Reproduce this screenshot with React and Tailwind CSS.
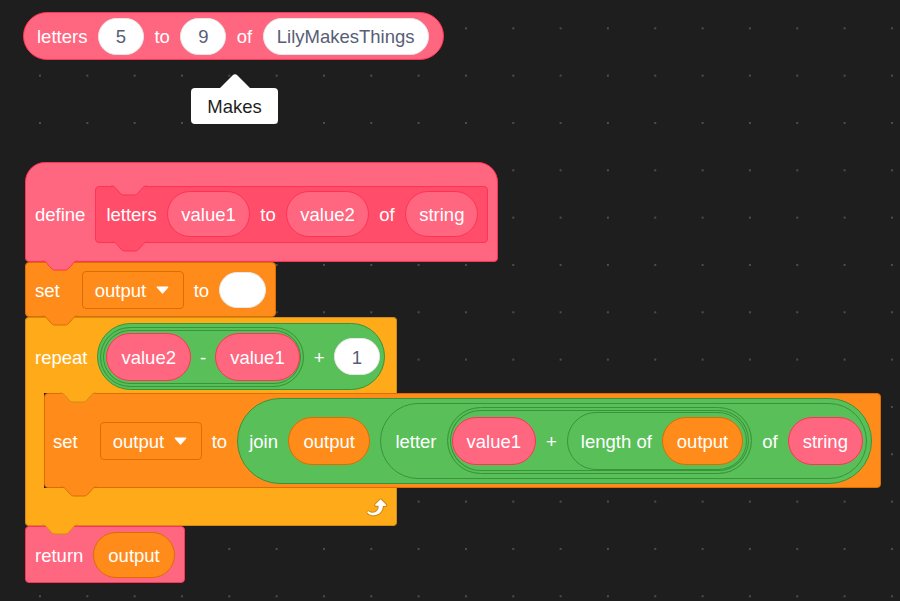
import React from 'react';

const TAB = 'M0 0 C3 0 4 1 5 2.5 L9 7 C10 8 11 9 13 9 H23 C25 9 26 8 27 7 L31 2.5 C32 1 33 0 36 0';

// label text sits a little below the box centre, like Scratch's
function T({ children }) {
  return <span className="pt-[3px]">{children}</span>;
}

// notch tab: drawn over the block that follows
function Tab({ fill, stroke, className }) {
  return (
    <svg className={`absolute z-10 ${className}`} width="36" height="10" viewBox="0 0 36 10" overflow="visible">
      <path d={TAB} fill={fill} stroke={stroke} strokeWidth="1" />
    </svg>
  );
}

function Input({ children, className = '' }) {
  return (
    <span className={`flex h-[37px] min-w-[46px] items-center justify-center rounded-full border border-[#e8e8e8] bg-white px-[13px] text-[#575E75] ${className}`}>
      <T>{children}</T>
    </span>
  );
}

function Arg({ children, h = 'h-[48px]', px = 'px-[14px]' }) {
  return (
    <span className={`flex ${h} ${px} items-center rounded-full border border-[#FF3355] bg-[#FF6680]`}>
      <T>{children}</T>
    </span>
  );
}

function Var({ children, h = 'h-[48px]' }) {
  return (
    <span className={`flex ${h} items-center rounded-full border border-[#DB6E00] bg-[#FF8C1A] px-[14px]`}>
      <T>{children}</T>
    </span>
  );
}

function Dropdown() {
  return (
    <span className="ml-[12px] flex h-[38px] w-[102px] items-center gap-[10px] rounded-[4px] border border-[#DB6E00] bg-[#FF8C1A] pl-[12px]">
      <T>output</T>
      <svg width="13" height="8" viewBox="0 0 13 8">
        <path d="M1.5 1.2 H11.5 L6.5 6.8 Z" fill="#fff" stroke="#fff" strokeWidth="1.6" strokeLinejoin="round" />
      </svg>
    </span>
  );
}

function RepeatIcon() {
  return (
    <svg width="26" height="26" viewBox="0 0 24 24">
      <path
        d="M23.3,11c-0.3,0.6-0.9,1-1.5,1h-1.6c-0.1,1.3-0.5,2.5-1.1,3.6c-0.9,1.7-2.3,3.2-4.1,4.1c-1.7,0.9-3.6,1.2-5.5,0.9c-1.8-0.3-3.5-1.1-4.9-2.3c-0.7-0.7-0.7-1.9,0-2.6c0.6-0.6,1.6-0.7,2.3-0.2H7c0.9,0.6,1.9,0.9,2.9,0.9s1.9-0.3,2.7-0.9c1.1-0.8,1.8-2.1,1.8-3.5h-1.5c-0.9,0-1.7-0.7-1.7-1.7c0-0.4,0.2-0.9,0.5-1.2l4.4-4.4c0.7-0.6,1.7-0.6,2.4,0L23,9.2C23.5,9.7,23.6,10.4,23.3,11z"
        fill="#cf8b17"
      />
      <path
        d="M21.8,11h-2.6c0,1.5-0.3,2.9-1,4.2c-0.8,1.6-2.1,2.8-3.7,3.6c-1.5,0.8-3.3,1.1-4.9,0.8c-1.6-0.2-3.2-1-4.4-2.1c-0.4-0.3-0.4-0.9-0.1-1.2c0.3-0.4,0.9-0.4,1.2-0.1l0,0c1,0.7,2.2,1.1,3.4,1.1s2.3-0.3,3.3-1c0.9-0.6,1.6-1.5,2-2.6c0.3-0.9,0.4-1.8,0.2-2.8h-2.4c-0.4,0-0.7-0.3-0.7-0.7c0-0.2,0.1-0.3,0.2-0.4l4.4-4.4c0.3-0.3,0.7-0.3,0.9,0L22,9.8c0.3,0.3,0.4,0.6,0.3,0.9S22,11,21.8,11z"
        fill="#fff"
      />
    </svg>
  );
}

function Tooltip() {
  return (
    <div className="absolute left-[191px] top-[73px] flex flex-col items-center">
      <svg width="34" height="16" viewBox="0 0 34 16" className="-mb-px">
        <path d="M1 16 L14.5 2.5 Q17 0 19.5 2.5 L33 16 Z" fill="#fff" />
      </svg>
      <div className="flex h-[36px] w-[87px] items-center justify-center rounded-[4px] bg-white text-[#1f1f1f]">
        <T>Makes</T>
      </div>
    </div>
  );
}

export default function App() {
  return (
    <div className="relative h-[601px] w-[900px] overflow-hidden bg-[#1e1e1e] bg-[radial-gradient(circle,#4d4d4d_0.9px,transparent_1.5px)] bg-[length:47.33px_47.33px] bg-[position:16.33px_4.67px] font-['Liberation_Sans',Arial,sans-serif] text-[18.5px] leading-none text-white">
      {/* loose reporter */}
      <div className="absolute left-[23px] top-[12px] flex h-[48px] items-center gap-[10.5px] rounded-full border border-[#FF3355] bg-[#FF6680] pl-[13px] pr-[14px]">
        <T>letters</T>
        <Input>5</Input>
        <T>to</T>
        <Input>9</Input>
        <T>of</T>
        <Input>LilyMakesThings</Input>
      </div>

      <Tooltip />

      {/* script */}
      <div className="absolute left-[25px] top-[162px] flex flex-col items-start">
        {/* define hat */}
        <div className="relative flex h-[100px] items-center gap-[10px] rounded-t-[20px] rounded-b-[4px] border border-[#FF3355] bg-[#FF6680] pl-[9px] pr-[9px] pt-[4px]">
          <T>define</T>
          <div className="relative flex h-[57px] items-center gap-[10.5px] rounded-[4px] border border-[#FF3355] bg-[#FF4D6A] pl-[10px] pr-[9px]">
            <Tab fill="#FF6680" stroke="#FF3355" className="left-[15px] top-[-1px]" />
            <T>letters</T>
            <Arg h="h-[46px]" px="px-[13px]">value1</Arg>
            <T>to</T>
            <Arg h="h-[46px]" px="px-[13px]">value2</Arg>
            <T>of</T>
            <Arg h="h-[46px]" px="px-[13px]">string</Arg>
            <Tab fill="#FF4D6A" stroke="#FF3355" className="left-[16px] top-full" />
          </div>
          <Tab fill="#FF6680" stroke="#FF3355" className="left-[16px] top-full" />
        </div>

        {/* set output to "" */}
        <div className="relative flex h-[55px] items-center gap-[10px] rounded-[4px] border border-[#DB6E00] bg-[#FF8C1A] pl-[9px] pr-[9px]">
          <T>set</T>
          <Dropdown />
          <T>to</T>
          <span className="h-[36px] w-[47px] rounded-full border border-[#e8e8e8] bg-white" />
          <Tab fill="#FF8C1A" stroke="#DB6E00" className="left-[16px] top-full" />
        </div>

        {/* repeat */}
        <div className="flex flex-col items-start">
          <div className="relative flex h-[76px] w-[372px] items-center gap-[9.5px] rounded-t-[4px] border-x border-t border-[#CF8B17] bg-[#FFAB19] pl-[9px] pt-[2px]">
            <T>repeat</T>
            <div className="flex h-[67px] items-center gap-[9.5px] rounded-full border border-[#389438] bg-[#59C059] pl-[2.5px] pr-[4.5px]">
              <div className="flex h-[60px] items-center gap-[9px] rounded-full border border-[#389438] bg-[#59C059] pl-[5px] pr-[3.5px] shadow-[inset_0_0_0_2px_#59C059,inset_0_0_0_3px_#389438]">
                <Arg>value2</Arg>
                <T>-</T>
                <Arg>value1</Arg>
              </div>
              <T>+</T>
              <Input>1</Input>
            </div>
            <Tab fill="#FFAB19" stroke="#CF8B17" className="left-[34px] top-full" />
          </div>

          <div className="flex">
            <div className="w-[19px] border-l border-[#CF8B17] bg-[#FFAB19]" />
            {/* set output to join ... */}
            <div className="relative flex h-[95px] items-center gap-[10px] rounded-[4px] border border-[#DB6E00] bg-[#FF8C1A] pl-[8px] pr-[8px]">
              <T>set</T>
              <Dropdown />
              <T>to</T>
              <div className="flex h-[86px] items-center gap-[10.5px] rounded-full border border-[#389438] bg-[#59C059] pl-[11px] pr-[4px]">
                <T>join</T>
                <Var>output</Var>
                <div className="flex h-[76px] items-center gap-[10px] rounded-full border border-[#389438] bg-[#59C059] pl-[14px] pr-[3.5px]">
                  <T>letter</T>
                  <div className="flex h-[67px] items-center gap-[10px] rounded-full border border-[#389438] bg-[#59C059] pl-[4px] pr-[4px] shadow-[inset_0_0_0_2px_#59C059,inset_0_0_0_3px_#389438]">
                    <Arg>value1</Arg>
                    <T>+</T>
                    <div className="flex h-[58px] items-center gap-[10px] rounded-full border border-[#389438] bg-[#59C059] pl-[13px] pr-[3px]">
                      <T>length of</T>
                      <Var>output</Var>
                    </div>
                  </div>
                  <T>of</T>
                  <Arg>string</Arg>
                </div>
              </div>
              <Tab fill="#FF8C1A" stroke="#DB6E00" className="left-[16px] top-full" />
            </div>
          </div>

          <div className="relative flex h-[38px] w-[372px] items-center justify-end rounded-b-[4px] border-x border-b border-[#CF8B17] bg-[#FFAB19] pr-[8px]">
            <RepeatIcon />
            <Tab fill="#FFAB19" stroke="#CF8B17" className="left-[16px] top-full" />
          </div>
        </div>

        {/* return */}
        <div className="relative flex h-[57px] items-center gap-[10px] rounded-[4px] border border-[#FF3355] bg-[#FF6680] pl-[9px] pr-[9px]">
          <T>return</T>
          <Var h="h-[46px]">output</Var>
        </div>
      </div>
    </div>
  );
}
